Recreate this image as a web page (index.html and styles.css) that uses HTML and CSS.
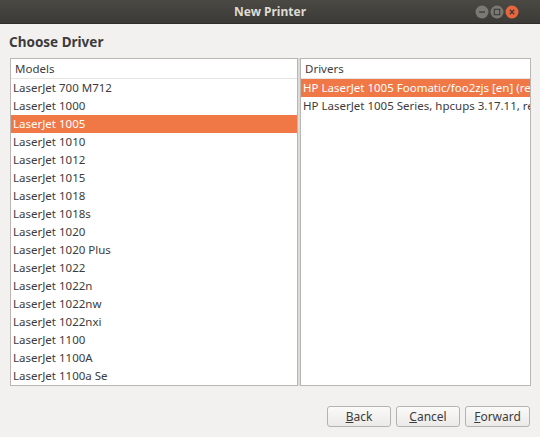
FILE: index.html
```html
<!DOCTYPE html>
<html lang="en">
<head>
  <meta charset="UTF-8">
  <title>New Printer</title>
  <link rel="stylesheet" href="styles.css">
</head>
<body>
  <div class="window">
    <div class="titlebar">
      <span class="title">New Printer</span>
      <div class="wm-buttons">
        <span class="wm-btn"><svg width="14" height="14" viewBox="0 0 14 14"><circle cx="7" cy="7" r="6.5" fill="#7a7974"/><rect x="4" y="6.4" width="6" height="1.3" fill="#3c3b37"/></svg></span>
        <span class="wm-btn"><svg width="14" height="14" viewBox="0 0 14 14"><circle cx="7" cy="7" r="6.5" fill="#7a7974"/><rect x="4.3" y="4.3" width="5.4" height="5.4" fill="none" stroke="#3c3b37" stroke-width="1.1"/></svg></span>
        <span class="wm-btn"><svg width="14" height="14" viewBox="0 0 14 14"><circle cx="7" cy="7" r="6.5" fill="#e8663d"/><path d="M4.8 4.8 L9.2 9.2 M9.2 4.8 L4.8 9.2" stroke="#3c3b37" stroke-width="1.3"/></svg></span>
      </div>
    </div>

    <div class="content">
      <h2 class="heading">Choose Driver</h2>

      <div class="panes">
        <div class="pane models">
          <div class="pane-header">Models</div>
          <ul class="list">
            <li>LaserJet 700 M712</li>
            <li>LaserJet 1000</li>
            <li class="selected">LaserJet 1005</li>
            <li>LaserJet 1010</li>
            <li>LaserJet 1012</li>
            <li>LaserJet 1015</li>
            <li>LaserJet 1018</li>
            <li>LaserJet 1018s</li>
            <li>LaserJet 1020</li>
            <li>LaserJet 1020 Plus</li>
            <li>LaserJet 1022</li>
            <li>LaserJet 1022n</li>
            <li>LaserJet 1022nw</li>
            <li>LaserJet 1022nxi</li>
            <li>LaserJet 1100</li>
            <li>LaserJet 1100A</li>
            <li>LaserJet 1100a Se</li>
          </ul>
        </div>
        <div class="handle"></div>
        <div class="pane drivers">
          <div class="pane-header">Drivers</div>
          <ul class="list">
            <li class="selected">HP LaserJet 1005 Foomatic/foo2zjs [en] (recommended)</li>
            <li>HP LaserJet 1005 Series, hpcups 3.17.11, requires proprietary plugin [en]</li>
          </ul>
        </div>
      </div>

      <div class="actions">
        <button class="btn"><u>B</u>ack</button>
        <button class="btn"><u>C</u>ancel</button>
        <button class="btn"><u>F</u>orward</button>
      </div>
    </div>
  </div>
</body>
</html>
```

FILE: styles.css
```css
body {
  margin: 0;
  width: 540px;
  height: 437px;
  overflow: hidden;
  font-family: "Noto Sans", "DejaVu Sans", sans-serif;
  font-size: 11.5px;
  color: #3c3c3c;
  background-color: #f2f1f0;
}

.window {
  display: flex;
  flex-direction: column;
  height: 437px;
}

.titlebar {
  position: relative;
  height: 23px;
  display: flex;
  align-items: center;
  justify-content: center;
  background: linear-gradient(#4a4944, #3b3a36);
  border-bottom: 1px solid #2e2d2a;
}

.title {
  color: #dfdbd2;
  font-weight: bold;
  font-size: 12px;
}

.wm-buttons {
  position: absolute;
  right: 21px;
  top: 5px;
  display: flex;
  gap: 1px;
}

.wm-btn svg {
  display: block;
}

.content {
  flex: 1;
  display: flex;
  flex-direction: column;
  padding: 0 9px 0 10px;
}

.heading {
  margin: 8px 0 0 -1px;
  height: 26px;
  font-size: 13.5px;
  font-weight: bold;
  color: #3c3c3c;
  line-height: 20px;
}

.panes {
  display: flex;
  height: 328px;
}

.pane {
  background-color: #fff;
  border: 1px solid #b8b7b3;
  overflow: hidden;
  box-sizing: border-box;
}

.models {
  width: 288px;
}

.drivers {
  flex: 1;
}

.handle {
  width: 2px;
  background-color: #dcdbd8;
}

.pane-header {
  height: 19px;
  line-height: 20px;
  padding-left: 4px;
  border-bottom: 1px solid #e6e5e2;
  white-space: nowrap;
}

.list {
  list-style: none;
  margin: 0;
  padding: 0;
}

.list li {
  height: 18px;
  line-height: 18px;
  padding-left: 2px;
  white-space: nowrap;
}

.list li.selected {
  background-color: #f07746;
  color: #fff;
}

.actions {
  display: flex;
  justify-content: flex-end;
  gap: 5px;
  margin-top: 20px;
  padding-right: 1px;
}

.btn {
  height: 21px;
  padding: 0;
  font-family: inherit;
  font-size: 12px;
  color: #3c3c3c;
  background: linear-gradient(#fafaf9, #eceae8);
  border: 1px solid #b4b3af;
  border-radius: 3px;
}

.btn:nth-child(1) {
  width: 64px;
}

.btn:nth-child(2) {
  width: 64px;
}

.btn:nth-child(3) {
  width: 65px;
}
```
